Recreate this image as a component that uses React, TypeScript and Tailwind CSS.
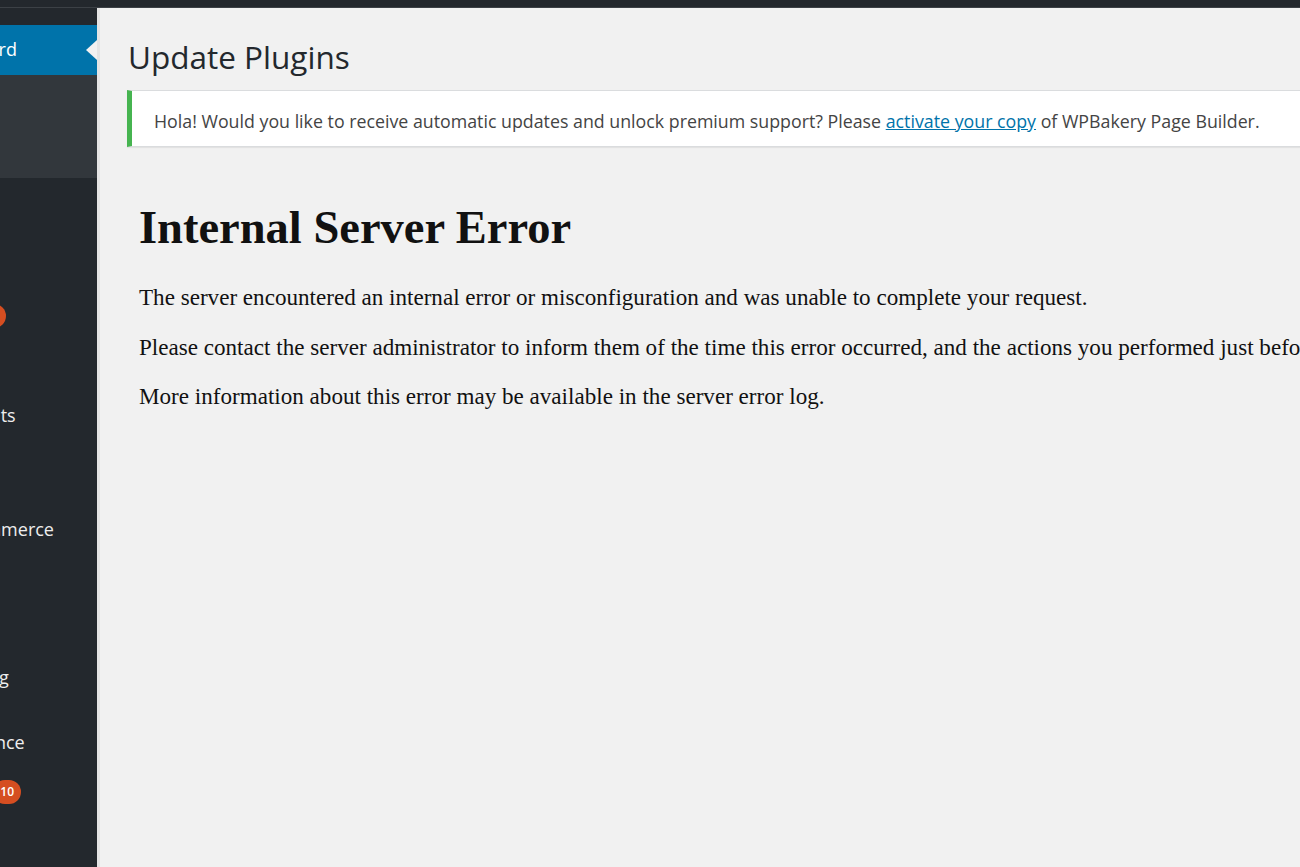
import React from "react";

type Item = { label: string; badge?: string; current?: boolean };

const Row = ({ item }: { item: Item }) => (
  <div
    className={`relative flex h-[49.5px] items-center pl-[43px] ${
      item.current ? "bg-[#0073aa] text-white" : "text-[#eeeeee]"
    }`}
  >
    <span className="whitespace-nowrap">{item.label}</span>
    {item.badge && (
      <span className="ml-[9px] inline-flex h-[24px] min-w-[24px] items-center justify-center rounded-full bg-[#d54e21] px-[7px] text-[12px] font-semibold leading-none text-white">
        {item.badge}
      </span>
    )}
    {item.current && (
      <span className="absolute right-0 top-1/2 h-0 w-0 -translate-y-1/2 border-y-[10px] border-r-[11px] border-y-transparent border-r-[#f1f1f1]" />
    )}
  </div>
);

const Sep = () => <div className="h-[15px]" />;

export default function App() {
  return (
    <div className="flex h-[867px] w-[1300px] flex-col overflow-hidden bg-[#f1f1f1] font-['Open_Sans',sans-serif]">
      <div className="h-[8px] shrink-0 border-b border-[#3c4146] bg-[#23282d]" />
      <div className="flex min-h-0 flex-1">
        <aside className="w-[97px] shrink-0 overflow-hidden bg-[#23282d] text-[18px]">
          <div className="-ml-[119px] w-[216px] pt-[17px]">
            <Row item={{ label: "Dashboard", current: true }} />
            <div className="flex h-[103px] flex-col justify-center gap-[6px] bg-[#32373c] pl-[16px] text-[17px] text-[#b4b9be]">
              <span>Home</span>
              <span>Updates</span>
            </div>
            <Sep />
            <Row item={{ label: "Posts" }} />
            <Row item={{ label: "Media" }} />
            <Row item={{ label: "Pages", badge: "2" }} />
            <Row item={{ label: "Contact" }} />
            <Row item={{ label: "Comments" }} />
            <Row item={{ label: "Forms" }} />
            <Sep />
            <Row item={{ label: "WooCommerce" }} />
            <Row item={{ label: "Products" }} />
            <Row item={{ label: "Analytics" }} />
            <Row item={{ label: "Marketing" }} />
            <Sep />
            <Row item={{ label: "Appearance" }} />
            <Row item={{ label: "Plugins", badge: "10" }} />
            <Row item={{ label: "Users" }} />
          </div>
        </aside>
        <main className="min-w-0 flex-1 overflow-hidden border-l-[3px] border-[#e4e4e4] pl-[27px] pt-[28.5px]">
          <h1 className="ml-[1px] text-[31.5px] font-normal leading-[40px] text-[#23282d]">Update Plugins</h1>
          <div className="-mr-[30px] mt-[13px] border border-l-[5px] border-[#dadcde] border-l-[#46b450] bg-white pb-[11px] pl-[22px] pt-[17px] text-[17.8px] leading-[27px] text-[#444444] shadow-[0_1px_1px_rgba(0,0,0,0.06)]">
            <p className="whitespace-nowrap">
              Hola! Would you like to receive automatic updates and unlock premium support? Please{" "}
              <a href="#" className="text-[#0073aa] underline">
                activate your copy
              </a>{" "}
              of WPBakery Page Builder.
            </p>
          </div>
          <div className="ml-[12px] font-['Liberation_Serif','Times_New_Roman',serif] text-[#111111]">
            <h1 className="mt-[54px] whitespace-nowrap text-[46.5px] font-bold leading-[53px]">Internal Server Error</h1>
            <p className="mt-[30.5px] whitespace-nowrap text-[23.1px] leading-[26.5px]">
              The server encountered an internal error or misconfiguration and was unable to complete your request.
            </p>
            <p className="mt-[23px] whitespace-nowrap text-[23.1px] leading-[26.5px]">
              Please contact the server administrator to inform them of the time this error occurred, and the actions you performed just before this error.
            </p>
            <p className="mt-[23px] whitespace-nowrap text-[23.1px] leading-[26.5px]">
              More information about this error may be available in the server error log.
            </p>
          </div>
        </main>
      </div>
    </div>
  );
}
